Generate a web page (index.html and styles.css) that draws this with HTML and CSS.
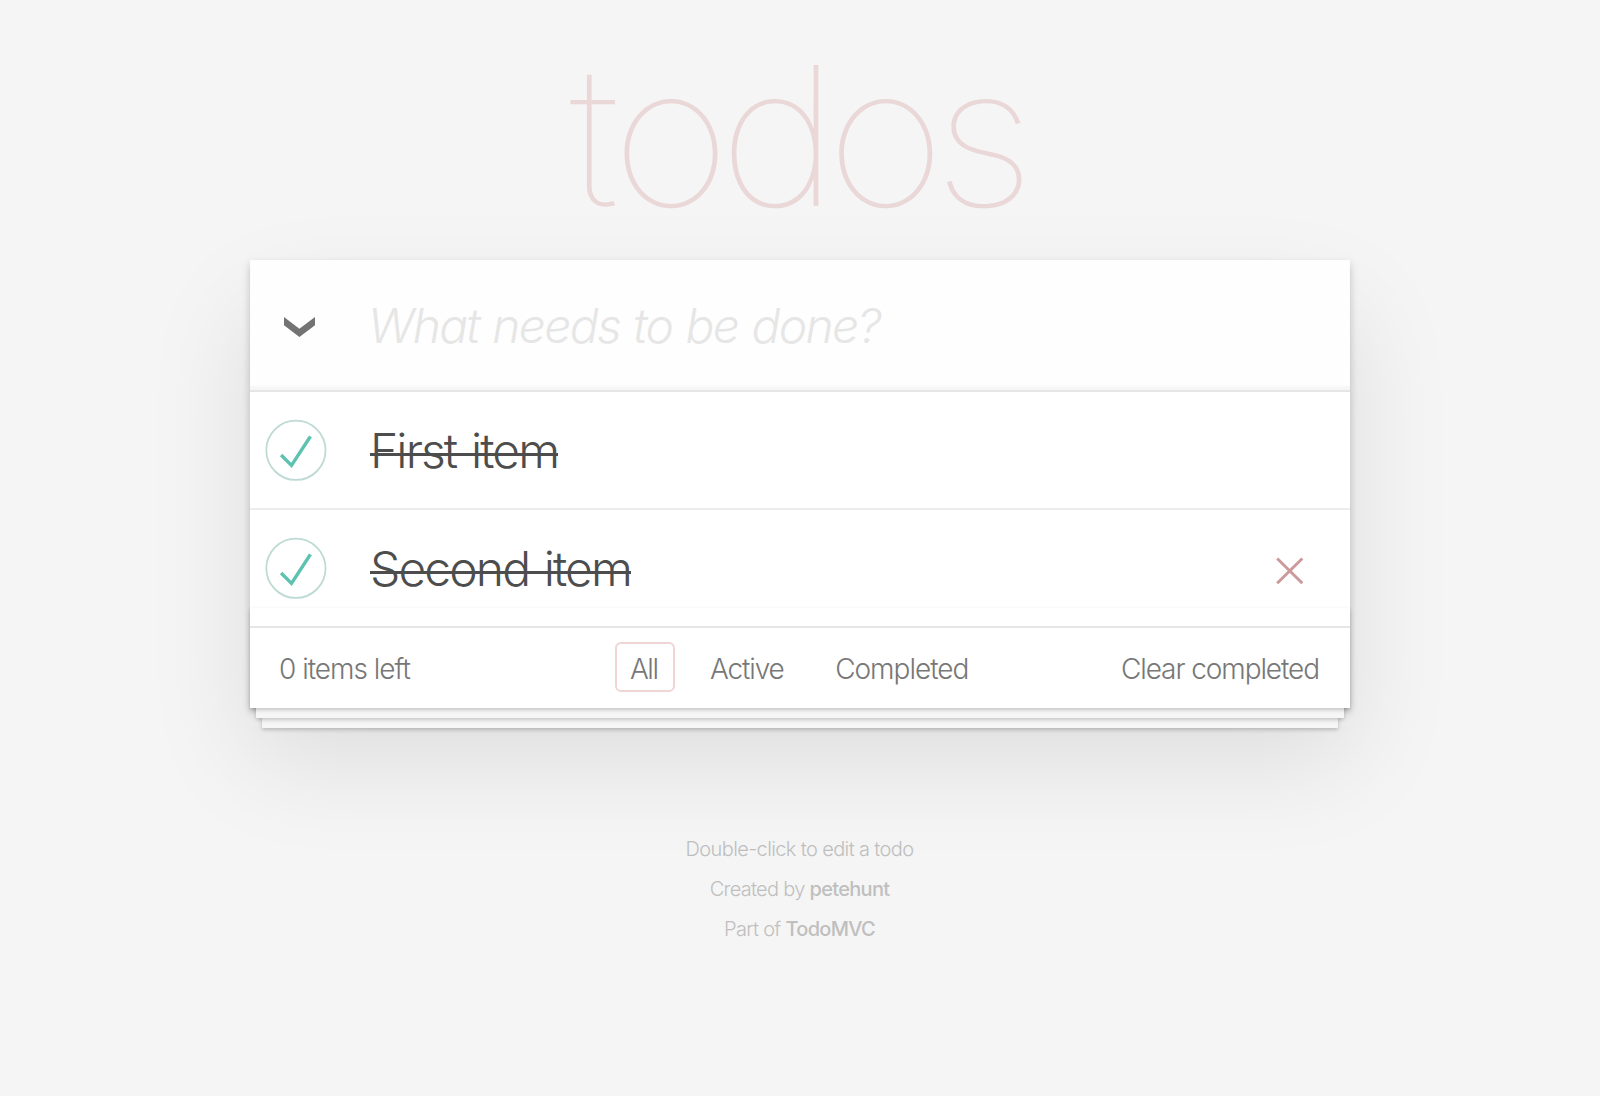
FILE: index.html
```html
<!DOCTYPE html>
<html lang="en">
<head>
<meta charset="utf-8">
<title>TodoMVC</title>
<link rel="stylesheet" href="styles.css">
</head>
<body>
<h1 class="title"><span class="lead">t</span>odos</h1>
<section class="todoapp">
  <header class="header">
    <svg class="toggle-all" viewBox="0 0 31 20"><path d="M0 0L15.4 11.7 31 0V8.2L15.4 20 0 8.2z"/></svg>
    <div class="new-todo"><span>What needs to be done?</span></div>
  </header>
  <ul class="todo-list">
    <li class="todo">
      <svg class="toggle" viewBox="-10 -18 100 135"><circle cx="50" cy="50" r="50"/><path d="M72 25L42 71 27 56l-4 4 20 20 34-52z"/></svg>
      <label class="label first"><span>First item</span></label>
    </li>
    <li class="todo">
      <svg class="toggle" viewBox="-10 -18 100 135"><circle cx="50" cy="50" r="50"/><path d="M72 25L42 71 27 56l-4 4 20 20 34-52z"/></svg>
      <label class="label second"><span>Second item</span></label>
      <svg class="destroy" viewBox="0 0 28 28"><path d="M1.2 1.5L26.3 26.3M26.3 1.5L1.2 26.3"/></svg>
    </li>
  </ul>
  <footer class="footer">
    <span class="count">0 items left</span>
    <nav class="filters">
      <a class="filter selected">All</a>
      <a class="filter active">Active</a>
      <a class="filter completed">Completed</a>
    </nav>
    <span class="clear">Clear completed</span>
  </footer>
</section>
<footer class="info">
  <p class="hint">Double-click to edit a todo</p>
  <p class="author">Created by <a>petehunt</a></p>
  <p class="part">Part of <a>TodoMVC</a></p>
</footer>
</body>
</html>
```
FILE: styles.css
```css
* { box-sizing: border-box; }
body {
  margin: 0;
  height: 1096px;
  overflow: hidden;
  background: #f5f5f5;
  color: #4d4d4d;
  font-family: Inter, "Liberation Sans", sans-serif;
  font-weight: 300;
}
.title {
  margin: 0;
  height: 260px;
  padding: 23px 7px 0 0;
  text-align: center;
  font-size: 194px;
  font-weight: 100;
  line-height: 226px;
  letter-spacing: -11.2px;
  color: #ead7d7;
  white-space: nowrap;
  transform: scaleX(1.06);
}
.lead { letter-spacing: -7px; }
.todoapp {
  position: relative;
  width: 1100px;
  margin: 0 auto;
  background: #fff;
  box-shadow: 0 4px 8px rgba(0,0,0,.2), 0 50px 100px rgba(0,0,0,.1);
}
.header {
  display: flex;
  align-items: center;
  height: 130px;
  padding-left: 34px;
  background: rgba(0,0,0,.003);
  box-shadow: inset 0 -4px 2px rgba(0,0,0,.03);
}
.toggle-all { width: 31px; height: 20px; margin: 4px 53px 0 0; fill: #737373; }
.new-todo {
  padding-top: 1px;
  font-size: 48px;
  line-height: 58px;
  font-style: italic;
  letter-spacing: -1.75px;
  word-spacing: 1.6px;
  color: #e6e6e6;
  white-space: nowrap;
}
.todo-list {
  margin: 0;
  padding: 0;
  list-style: none;
  border-top: 2px solid #e6e6e6;
}
.todo { display: flex; align-items: center; height: 118px; border-bottom: 2px solid #ededed; }
.todo:last-child { height: 116px; border-bottom: 0; }
.toggle { width: 80px; height: 80px; fill: #5dc2af; overflow: visible; }
.toggle circle { fill: none; stroke: #bddad5; stroke-width: 3; }
.label {
  flex: 1;
  margin-left: 40px;
  padding-top: 2px;
  font-size: 48px;
  line-height: 58px;
  word-spacing: 3px;
  white-space: nowrap;
}
.label span {
  display: inline-block;
  background: linear-gradient(#4d4d4d, #4d4d4d) 0 31px / 100% 3px no-repeat;
}
.first { letter-spacing: -1.9px; }
.second { letter-spacing: -1.9px; }
.destroy { width: 28px; height: 28px; margin: 6px 46px 0 0; fill: none; stroke: #cc9a9a; stroke-width: 3; }
.footer {
  position: relative;
  display: grid;
  grid-template-columns: 335px 1fr auto;
  align-items: center;
  height: 82px;
  padding: 0 31px 0 29px;
  border-top: 2px solid #e6e6e6;
  color: #777;
  font-size: 28px;
  line-height: 34px;
  white-space: nowrap;
}
.footer::before {
  content: "";
  position: absolute;
  left: 0;
  right: 0;
  bottom: 0;
  height: 100px;
  box-shadow: 0 2px 4px rgba(0,0,0,.2), 0 16px 0 -6px #f6f6f6, 0 18px 4px -6px rgba(0,0,0,.2), 0 32px 0 -12px #f6f6f6, 0 34px 4px -12px rgba(0,0,0,.2);
}
.count, .clear { padding-top: 2px; letter-spacing: -1px; }
.clear { letter-spacing: -1.08px; }
.filters { display: flex; gap: 20px; margin: 0 0 2px 1px; }
.filter { padding: 8px 13px 4px; height: 50px; border: 2px solid transparent; border-radius: 6px; }
.filter.selected { width: 60px; border-color: #efd5d5; letter-spacing: -1.5px; }
.active { letter-spacing: -1.15px; }
.completed { margin-left: 1.5px; letter-spacing: -1px; }
.info {
  margin-top: 121px;
  text-align: center;
  font-size: 20px;
  line-height: 40px;
  color: #bfbfbf;
  letter-spacing: -.62px;
}
.info p { margin: 0; padding-right: 1px; }
.author, .part { letter-spacing: -.7px; }
.info a { font-weight: 500; }
```
